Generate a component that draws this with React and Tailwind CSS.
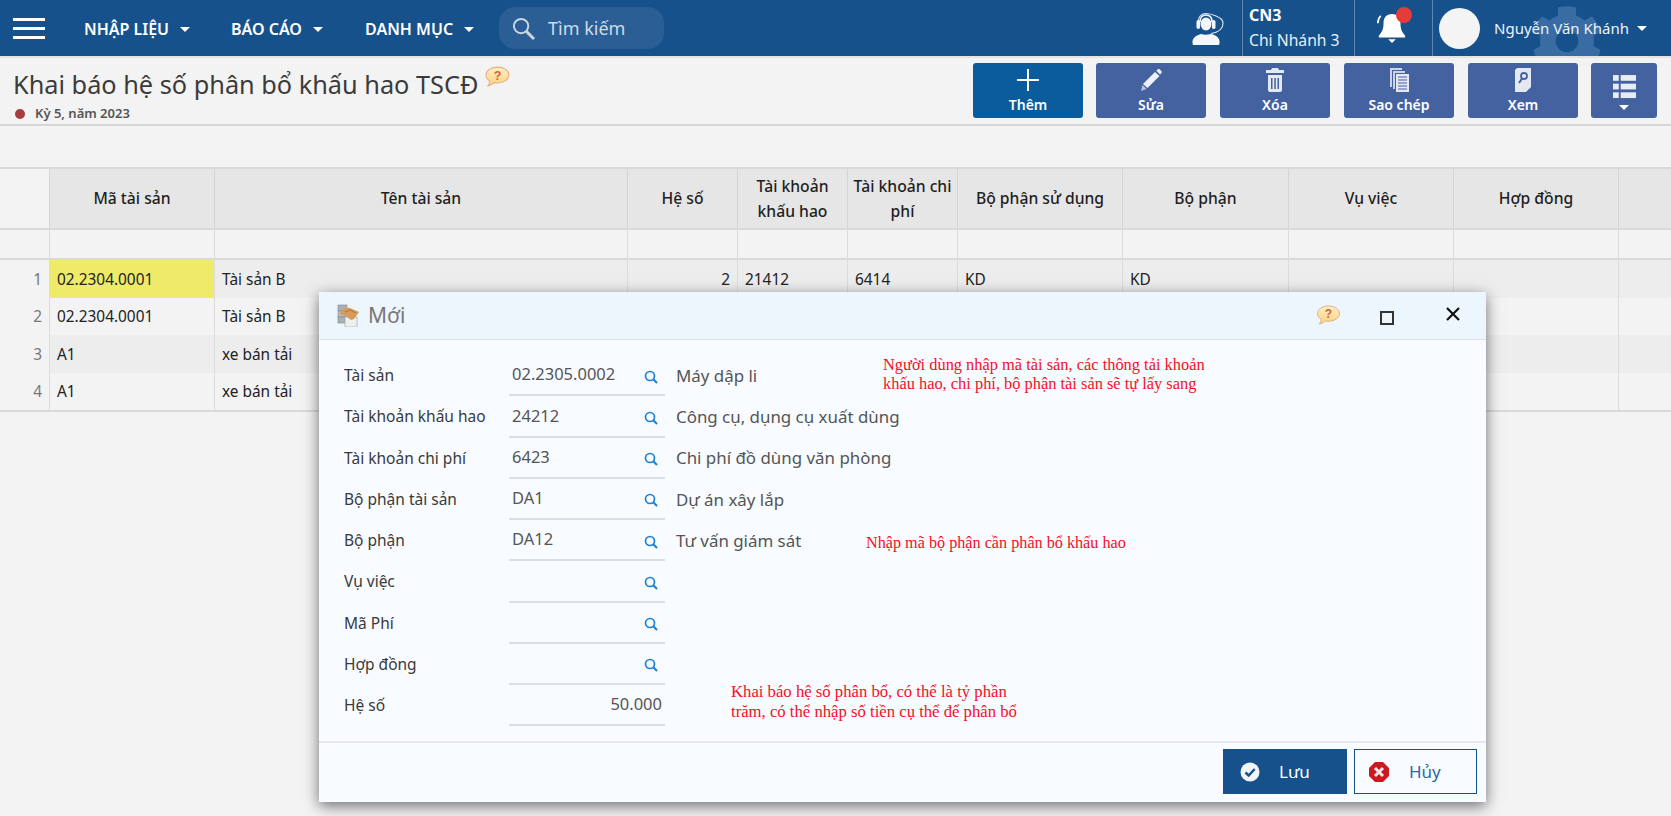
import React from 'react';
import { FaCog } from 'react-icons/fa';

const Caret = ({ className = '' }) => (
    <span className={`inline-block w-0 h-0 border-x-[5px] border-x-transparent border-t-[5px] border-t-white ${className}`} />
);

const HelpBubble = ({ className = '' }) => (
    <svg viewBox="0 0 24 21" className={className}>
        <defs>
            <linearGradient id="helpFill" x1="0" y1="0" x2="0" y2="1">
                <stop offset="0" stopColor="#ffefc4" />
                <stop offset="1" stopColor="#fbd27d" />
            </linearGradient>
        </defs>
        <path d="M12 1C5.900 1 1 4.200 1 8.600c0 2.400 1.500 4.500 3.800 5.900-.2 1.600-.9 3.200-1.900 4.600 2.500-.6 4.600-1.900 6-3.200 1 .2 2 .3 3.100.3 6.100 0 11-3.300 11-7.600C23 4.200 18.100 1 12 1z" fill="url(#helpFill)" stroke="#e5ae83" strokeWidth="1" />
        <text x="12" y="13" textAnchor="middle" fontSize="12" fontWeight="700" fill="#d9603a" fontFamily="Liberation Sans, sans-serif">?</text>
    </svg>
);

const SearchIcon = () => (
    <svg viewBox="0 0 14 14" className="w-[14px] h-[14px] mt-[4px] shrink-0" fill="none" stroke="#1a82d0" strokeWidth="1.700">
        <circle cx="6" cy="6" r="4.500" />
        <path d="M9.300 9.300L13 13" strokeWidth="2" />
    </svg>
);

const PlusIcon = () => (
    <svg viewBox="0 0 24 24" className="w-[24px] h-[24px]" fill="#fff"><rect x="11" y="1" width="2" height="22" /><rect x="1" y="11" width="22" height="2" /></svg>
);

const PencilIcon = () => (
    <svg viewBox="0 0 24 24" className="w-[24px] h-[24px]">
        <path d="M2 23l1.500-6L7.500 21z" fill="#b9c4da" />
        <path d="M4 16L16 4l4.500 4L8.500 20z" fill="#eef1f7" />
        <path d="M17.300 2.700l1.300-1.200c.7-.6 1.500-.6 2.200 0l1.500 1.400c.6.700.6 1.500 0 2.200l-1.200 1.300z" fill="#eef1f7" />
    </svg>
);

const TrashIcon = () => (
    <svg viewBox="0 0 18 24" className="w-[18px] h-[24px]" fill="#e4e8f2">
        <path d="M6 0h6l1 2h5v3H0V2h5z" />
        <path fillRule="evenodd" d="M2 7h14v15c0 1-.8 2-2 2H4c-1.200 0-2-1-2-2zM5 10v11h1.500V10zM8.300 10v11h1.500V10zM11.500 10v11H13V10z" />
    </svg>
);

const CopyIcon = () => (
    <svg viewBox="0 0 24 24" className="w-[24px] h-[24px]">
        <path d="M3 0h12v2H5v17H3z" fill="#cdd5e5" />
        <path d="M6 3h12v2H8v16H6z" fill="#cdd5e5" />
        <path d="M9 6h13v18H9z" fill="#e4e8f2" />
        <path d="M11 9h9M11 12h9M11 15h9M11 18h9M11 21h9" stroke="#44629f" strokeWidth="1.200" />
    </svg>
);

const ViewIcon = () => (
    <svg viewBox="0 0 24 24" className="w-[24px] h-[24px]">
        <path d="M6 0h14v19l-5 5H4V2z" fill="#e4e8f2" />
        <circle cx="13" cy="8" r="3" fill="none" stroke="#44629f" strokeWidth="1.800" />
        <path d="M11 10.500L8 15" stroke="#44629f" strokeWidth="2" />
    </svg>
);

const ListIcon = () => (
    <svg viewBox="0 0 24 26" className="w-[23px] h-[25px]" fill="#e9ecf4">
        <rect x="0" y="0" width="6" height="6" /><rect x="8" y="0" width="16" height="6" />
        <rect x="0" y="9" width="6" height="6" /><rect x="8" y="9" width="16" height="6" />
        <rect x="0" y="18" width="6" height="6" /><rect x="8" y="18" width="16" height="6" />
    </svg>
);

const AgentIcon = () => (
    <svg viewBox="0 0 34 33" className="w-[34px] h-[33px]" fill="none">
        <path d="M7 10C7 4.800 10.500 1.500 15 1.500c3 0 6 .8 10 2.500 4.500 2 7 3.500 7 7.500 0 4-3 8.500-12 10" stroke="#dfe7f1" strokeWidth="1.100" />
        <path d="M9 10c0-4.500 2.500-7 6-7s6 2.500 6 7" stroke="#f4f6fa" strokeWidth="1.600" />
        <ellipse cx="15" cy="12" rx="5.500" ry="6.500" fill="#f4f6fa" />
        <rect x="5.500" y="8" width="3.500" height="9" rx="1.700" fill="#f4f6fa" />
        <rect x="21" y="8" width="3.500" height="9" rx="1.700" fill="#f4f6fa" />
        <path d="M2 33c-1.500-4 0-9 8-11 3 1 6 1 10 0 7 1.500 10 6 8 11 -3 .5-23 .5-26 0z" fill="#f4f6fa" />
    </svg>
);

const BellIcon = () => (
    <svg viewBox="0 0 34 36" className="w-[32px] h-[34px]" fill="#fff">
        <path d="M17 3c-6 0-9 4-9 10 0 7-2 10-5 13v2h28v-2c-3-3-5-6-5-13 0-6-3-10-9-10z" />
        <path d="M13 30h8l-4 4z" />
        <path d="M5 5C3 7 2 10 2 13" stroke="#fff" strokeWidth="1.800" fill="none" />
    </svg>
);

const DialogIcon = () => (
    <svg viewBox="0 0 23 23" className="w-[23px] h-[23px]">
        <rect x="1" y="1" width="9" height="6" fill="#a9b1b6" stroke="#7d868c" strokeWidth="0.600" />
        <rect x="1" y="7" width="9" height="6" fill="#b9c0c4" stroke="#7d868c" strokeWidth="0.600" />
        <rect x="1" y="13" width="9" height="6" fill="#a9b1b6" stroke="#7d868c" strokeWidth="0.600" />
        <rect x="8" y="13" width="12" height="10" fill="#eef0ee" stroke="#9aa1a3" strokeWidth="0.600" />
        <path d="M2 10l6-6h5l9 4-5 7-3 1-5-4z" fill="#d79a5b" />
        <path d="M8 8l5-2 6 3" stroke="#a96c32" strokeWidth="0.800" fill="none" />
    </svg>
);

const CheckCircle = () => (
    <svg viewBox="0 0 20 20" className="w-[20px] h-[20px]">
        <circle cx="10" cy="10" r="9.500" fill="#f1f4f8" />
        <path d="M5.500 10.500l3.200 3 6-6.500" fill="none" stroke="#16518c" strokeWidth="2.400" />
    </svg>
);

const CancelIcon = () => (
    <svg viewBox="0 0 20 20" className="w-[20px] h-[20px]">
        <path d="M6 0h8l6 6v8l-6 6H6l-6-6V6z" fill="#cc1a1f" />
        <path d="M6 6l8 8M14 6l-8 8" stroke="#f3e9e9" strokeWidth="3" />
    </svg>
);

const nav = ['NHẬP LIỆU', 'BÁO CÁO', 'DANH MỤC'];
const columns = ['Mã tài sản', 'Tên tài sản', 'Hệ số', <>Tài khoản<br />khấu hao</>, <>Tài khoản chi<br />phí</>, 'Bộ phận sử dụng', 'Bộ phận', 'Vụ việc', 'Hợp đồng', ''];
const rows = [
    ['02.2304.0001', 'Tài sản B', '2', '21412', '6414', 'KD', 'KD', '', '', ''],
    ['02.2304.0001', 'Tài sản B', '', '', '', '', '', '', '', ''],
    ['A1', 'xe bán tải', '', '', '', '', '', '', '', ''],
    ['A1', 'xe bán tải', '', '', '', '', '', '', '', ''],
];
const rowHeights = ['h-[38px]', 'h-[37px]', 'h-[38px]', 'h-[37px]'];
const formRows = [
    ['Tài sản', '02.2305.0002', 'Máy dập li'],
    ['Tài khoản khấu hao', '24212', 'Công cụ, dụng cụ xuất dùng'],
    ['Tài khoản chi phí', '6423', 'Chi phí đồ dùng văn phòng'],
    ['Bộ phận tài sản', 'DA1', 'Dự án xây lắp'],
    ['Bộ phận', 'DA12', 'Tư vấn giám sát'],
    ['Vụ việc', '', ''],
    ['Mã Phí', '', ''],
    ['Hợp đồng', '', ''],
];
const gridCols = 'grid grid-cols-[49px_165px_413px_110px_110px_110px_165px_166px_165px_165px_1fr]';

const Header = () => (
    <header className="relative h-[56px] bg-[#16518c] flex items-center text-white overflow-hidden">
        <div className="ml-[13px] w-[32px] flex flex-col gap-[6px]">
            <span className="h-[3px] bg-white" />
            <span className="h-[3px] bg-white" />
            <span className="h-[3px] bg-white" />
        </div>
        <nav className="flex ml-[39px] h-full items-center pt-[2px] text-[16px] font-semibold">
            <span className="w-[147px] flex items-center gap-[11px]">{nav[0]}<Caret /></span>
            <span className="w-[134px] flex items-center gap-[11px]">{nav[1]}<Caret /></span>
            <span className="w-[134px] flex items-center gap-[11px]">{nav[2]}<Caret /></span>
        </nav>
        <div className="w-[165px] h-[42px] rounded-[16px] bg-[#2b5e94] flex items-center pl-[13px] pt-[1px] gap-[13px] text-[#cfdbe8] text-[18px]">
            <svg viewBox="0 0 24 24" className="w-[23px] h-[23px]" fill="none" stroke="#c9d6e4" strokeWidth="2"><circle cx="9.500" cy="9.500" r="7.500" /><path d="M15 15l8 8" strokeWidth="3" /></svg>
            Tìm kiếm
        </div>
        <div className="ml-auto flex h-full items-center">
            <AgentIcon />
            <div className="ml-[17px] w-[112px] h-full border-l border-[#5d86b0] pl-[6px] flex flex-col justify-center leading-[25px]">
                <span className="text-[16px] font-bold">CN3</span>
                <span className="text-[15.700px] text-[#e8eef5]">Chi Nhánh 3</span>
            </div>
            <div className="relative w-[78px] h-full border-l border-[#5d86b0] flex items-center pl-[21px]">
                <BellIcon />
                <span className="absolute left-[41px] top-[7px] w-[16px] h-[16px] rounded-full bg-[#e53b3b]" />
            </div>
            <div className="relative w-[239px] h-full border-l border-[#5d86b0] flex items-center pl-[6px]">
                <FaCog className="absolute left-[98px] top-[5px] w-[72px] h-[72px] text-[#386ca2]" />
                <span className="relative w-[41px] h-[41px] rounded-full bg-[#f4f4f4]" />
                <span className="relative ml-[14px] text-[15px] text-[#eef3f8]">Nguyễn Văn Khánh</span>
                <Caret className="relative ml-[8px]" />
            </div>
        </div>
    </header>
);

const ToolButton = ({ icon, label, primary }) => (
    <button className={`w-[110px] h-[55px] rounded-[3px] flex flex-col items-center justify-between pt-[5px] pb-[4px] text-white text-[14px] font-semibold leading-[18px] ${primary ? 'bg-[#0a5c9c] -mr-[1px]' : 'bg-[#44629f]'}`}>
        {icon}
        <span>{label}</span>
    </button>
);

const TitleBar = () => (
    <div className="h-[70px] border-y-2 border-[#d6d6d6] border-t-[#e4e4e4] flex justify-between pl-[13px] pr-[14px]">
        <div>
            <div className="flex items-start mt-[10px]">
                <h1 className="text-[25.300px] leading-[33px] text-[#3b3b3b]">Khai báo hệ số phân bổ khấu hao TSCĐ</h1>
                <HelpBubble className="w-[25px] h-[22px] ml-[7px] -mt-[2px]" />
            </div>
            <div className="flex items-center mt-[3px] pl-[2px] text-[13px] font-semibold text-[#555]">
                <span className="w-[10px] h-[10px] rounded-full bg-[#a33e3e] mr-[10px]" />
                Kỳ 5, năm 2023
            </div>
        </div>
        <div className="flex gap-[14px] mt-[5px]">
            <ToolButton primary icon={<PlusIcon />} label="Thêm" />
            <ToolButton icon={<PencilIcon />} label="Sửa" />
            <ToolButton icon={<TrashIcon />} label="Xóa" />
            <ToolButton icon={<CopyIcon />} label="Sao chép" />
            <ToolButton icon={<ViewIcon />} label="Xem" />
            <button className="ml-[-1px] w-[66px] h-[55px] rounded-[3px] bg-[#44629f] flex flex-col items-center pt-[12px] gap-[5px]">
                <ListIcon />
                <Caret />
            </button>
        </div>
    </div>
);

const AssetTable = () => (
    <div className="mt-[41px] border-y-2 border-[#d9d9d9] text-[15.400px] text-[#222]">
        <div className={`${gridCols} h-[61px] border-b-2 border-[#d9d9d9] text-[15.700px] font-medium text-[#1f1f1f] leading-[25px] text-center`}>
            <div />
            {columns.map((c, i) => (
                <div key={i} className="bg-[#e6e6e6] border-l border-[#d4d4d4] flex items-center justify-center">
                    <span>{c}</span>
                </div>
            ))}
        </div>
        <div className={`${gridCols} h-[30px] border-b-2 border-[#d9d9d9]`}>
            <div />
            {columns.map((c, i) => <div key={i} className="border-l border-[#dcdcdc]" />)}
        </div>
        {rows.map((row, r) => (
            <div key={r} className={`${gridCols} ${rowHeights[r]} ${r % 2 === 0 ? 'bg-[#ededed]' : ''}`}>
                <div className="flex items-center justify-end pt-[1px] pr-[7px] text-[#777] bg-[#f3f3f3]">{r + 1}</div>
                {row.map((cell, i) => (
                    <div
                        key={i}
                        className={`border-l border-[#dcdcdc] flex items-center pt-[1px] px-[7px] ${i === 2 ? 'justify-end' : ''} ${r === 0 && i === 0 ? 'bg-[#eeea6a]' : ''}`}
                    >
                        {cell}
                    </div>
                ))}
            </div>
        ))}
    </div>
);

const FormRow = ({ label, value, desc }) => (
    <div className="flex h-[41.250px] items-center">
        <label className="w-[165px] text-[15.500px] text-[#3a3a3a]">{label}</label>
        <div className="w-[156px] h-full border-b-2 border-[#dcdfe2] flex items-center justify-between pl-[3px] pr-[7px] text-[16.500px] text-[#555]">
            <span>{value}</span>
            <SearchIcon />
        </div>
        <span className="pl-[11px] text-[16.900px] text-[#555]">{desc}</span>
    </div>
);

const Dialog = () => (
    <div className="absolute left-[319px] top-[292px] w-[1167px] h-[510px] bg-[#f8fbff] shadow-[0_4px_14px_rgba(0,0,0,0.55)] flex flex-col text-[15px]">
        <div className="h-[48px] shrink-0 bg-[#edf6fd] border-b border-[#dfe4e8] flex items-center pl-[18px]">
            <DialogIcon />
            <span className="ml-[8px] text-[21px] text-[#777]">Mới</span>
            <HelpBubble className="w-[25px] h-[21px] ml-auto" />
            <span className="ml-[39px] mt-[5px] w-[14px] h-[14px] border-2 border-[#333]" />
            <svg viewBox="0 0 14 14" className="w-[14px] h-[14px] ml-[52px] mr-[26px] -mt-[3px]" stroke="#111" strokeWidth="2.200"><path d="M1 1l12 12M13 1L1 13" /></svg>
        </div>
        <div className="relative flex-1 pl-[25px] pt-[15px]">
            {formRows.map((f) => <FormRow key={f[0]} label={f[0]} value={f[1]} desc={f[2]} />)}
            <div className="flex h-[41.250px] items-center">
                <label className="w-[165px] text-[15.500px] text-[#3a3a3a]">Hệ số</label>
                <div className="w-[156px] h-full border-b-2 border-[#dcdfe2] flex items-center justify-end pr-[3px] text-[16.500px] text-[#555]">50.000</div>
            </div>
            <div className="absolute left-[564px] top-[15px] font-['Liberation_Serif',serif] text-[16.400px] leading-[19px] text-[#f5101f]">
                Người dùng nhập mã tài sản, các thông tải khoản<br />khấu hao, chi phí, bộ phận tài sản sẽ tự lấy sang
            </div>
            <div className="absolute left-[547px] top-[194px] font-['Liberation_Serif',serif] text-[16.200px] leading-[19px] text-[#f5101f]">
                Nhập mã bộ phận cần phân bổ khấu hao
            </div>
            <div className="absolute left-[412px] top-[342px] font-['Liberation_Serif',serif] text-[16.700px] leading-[20px] text-[#f5101f]">
                Khai báo hệ số phân bổ, có thể là tỷ phần<br />trăm, có thể nhập số tiền cụ thể để phân bổ
            </div>
        </div>
        <div className="h-[61px] shrink-0 border-t-2 border-[#e6e8ec] flex justify-end items-start pt-[6px] pr-[9px] gap-[7px] text-[17px]">
            <button className="w-[124px] h-[45px] bg-[#16518c] text-white flex items-center pl-[17px] gap-[19px]">
                <CheckCircle />Lưu
            </button>
            <button className="w-[123px] h-[45px] border border-[#16518c] text-[#2e68a5] flex items-center pl-[14px] gap-[20px]">
                <CancelIcon />Hủy
            </button>
        </div>
    </div>
);

export default function App() {
    return (
        <div className="relative h-[816px] overflow-hidden bg-[#f3f3f3] font-['Noto_Sans','Open_Sans',sans-serif]">
            <Header />
            <TitleBar />
            <AssetTable />
            <Dialog />
        </div>
    );
}
